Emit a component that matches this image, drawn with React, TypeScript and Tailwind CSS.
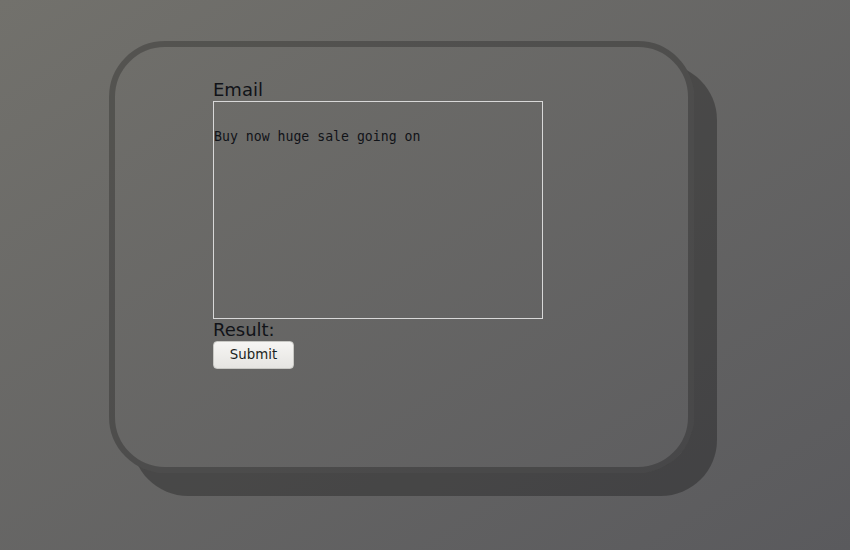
import React from "react";

export default function App() {
  return (
    <div
      className="h-[550px] w-full overflow-hidden bg-gradient-to-br from-[#72716c] to-[#5a5a5d] pt-[41px] pl-[109px]"
      style={{ fontFamily: '"DejaVu Sans", sans-serif' }}
    >
      <div className="w-[585px] h-[432px] rounded-[56px] border-[6px] border-[rgba(0,0,0,0.24)] shadow-[23px_23px_0_rgba(0,0,0,0.28)] pl-[98px] pt-[32px]">
        <div className="text-[18px] leading-[22px] text-[#111318]">Email</div>
        <textarea
          className="block w-[330px] h-[218px] border border-[#d8d8d8] bg-transparent p-0 pt-[27px] text-[13.2px] leading-[16px] text-[#111318] resize-none outline-none"
          style={{ fontFamily: '"DejaVu Sans Mono", monospace' }}
          defaultValue="Buy now huge sale going on"
        />
        <div className="text-[18px] leading-[22px] text-[#111318]">Result:</div>
        <button
          className="block w-[81px] h-[28px] rounded-[4px] border border-[#c8c8c4] bg-gradient-to-b from-[#f6f5f3] to-[#e6e5e2] text-[13.33px] text-[#1a1f22]"
          style={{ fontFamily: '"DejaVu Sans", sans-serif' }}
        >
          Submit
        </button>
      </div>
    </div>
  );
}
